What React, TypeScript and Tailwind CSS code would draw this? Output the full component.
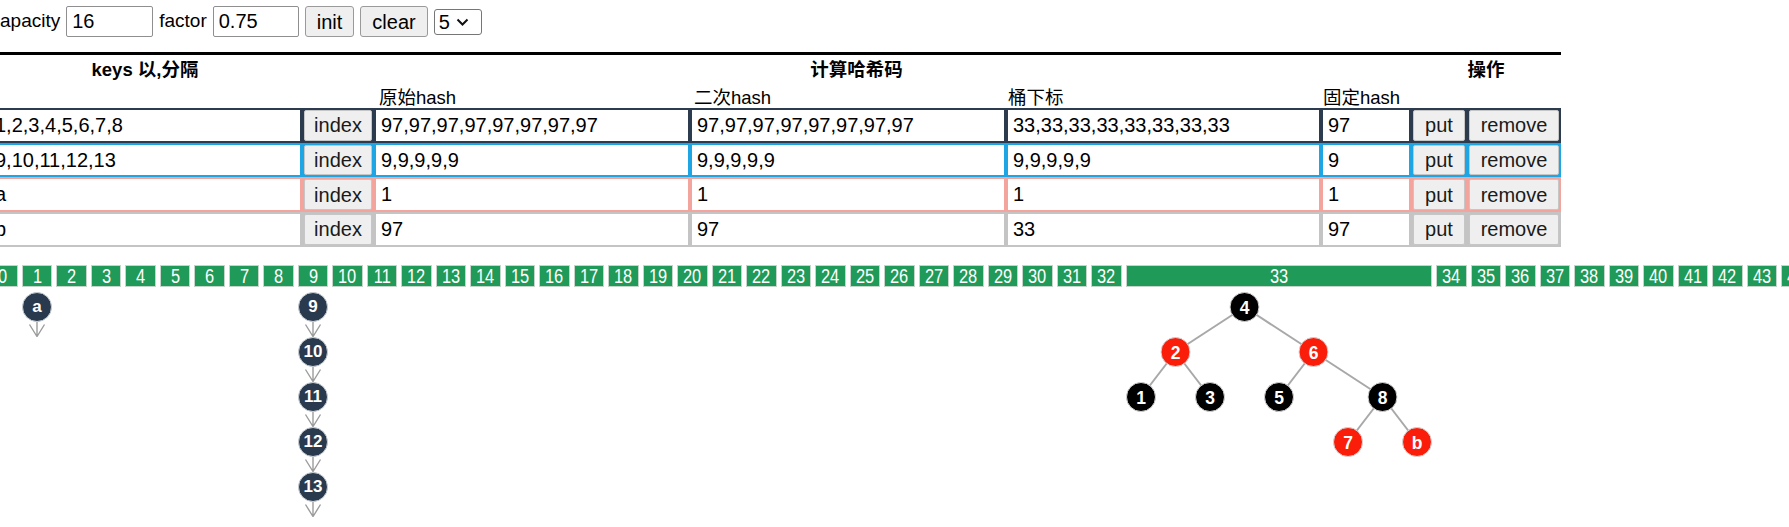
import React from "react";

type Row = {
  color: string;
  keys: string;
  h1: string;
  h2: string;
  idx: string;
  fixed: string;
};

const rows: Row[] = [
  { color: "bg-[#2c3b4d]", keys: "1,2,3,4,5,6,7,8", h1: "97,97,97,97,97,97,97,97", h2: "97,97,97,97,97,97,97,97", idx: "33,33,33,33,33,33,33,33", fixed: "97" },
  { color: "bg-[#1ea5e3]", keys: "9,10,11,12,13", h1: "9,9,9,9,9", h2: "9,9,9,9,9", idx: "9,9,9,9,9", fixed: "9" },
  { color: "bg-[#f3a59d]", keys: "a", h1: "1", h2: "1", idx: "1", fixed: "1" },
  { color: "bg-[#c4c4c4]", keys: "b", h1: "97", h2: "97", idx: "33", fixed: "97" },
];

const GRID = "grid grid-cols-[310px_68px_312px_312px_311px_86px_52px_90px] gap-x-[4px] px-[2px]";

function Cell({ value }: { value: string }) {
  return (
    <input
      readOnly
      defaultValue={value}
      className="h-full w-full min-w-0 bg-white px-[5px] text-[20px] text-black outline-none border-0"
    />
  );
}

function RowBtn({ label }: { label: string }) {
  return (
    <button className="h-full w-full bg-[#efefef] border border-[#c6c6c6] rounded-[2px] text-[20px] text-[#1a1a1a] leading-none">
      {label}
    </button>
  );
}

function Arrow() {
  return (
    <svg width="18" height="15" viewBox="0 0 18 15" className="block">
      <path d="M9 0V14.5M1.5 2.5L9 14.5L16.5 2.5" fill="none" stroke="#9c9c9c" strokeWidth="1.4" />
    </svg>
  );
}

function Chain({ items }: { items: string[] }) {
  return (
    <div className="flex flex-col items-center mt-[4.7px]">
      {items.map((it) => (
        <React.Fragment key={it}>
          <div className="w-[30px] h-[30px] rounded-full bg-[#2a3a4e] border border-[#c9ced4] flex items-center justify-center text-white font-bold text-[17px] leading-none">
            {it}
          </div>
          <Arrow />
        </React.Fragment>
      ))}
    </div>
  );
}

type TNode = { id: string; i: number; d: number; red: boolean };
const tnodes: TNode[] = [
  { id: "1", i: 0, d: 2, red: false },
  { id: "2", i: 1, d: 1, red: true },
  { id: "3", i: 2, d: 2, red: false },
  { id: "4", i: 3, d: 0, red: false },
  { id: "5", i: 4, d: 2, red: false },
  { id: "6", i: 5, d: 1, red: true },
  { id: "7", i: 6, d: 3, red: true },
  { id: "8", i: 7, d: 2, red: false },
  { id: "b", i: 8, d: 3, red: true },
];
const tedges: [string, string][] = [
  ["4", "2"], ["4", "6"], ["2", "1"], ["2", "3"], ["6", "5"], ["6", "8"], ["8", "7"], ["8", "b"],
];
const TW = 9 * 34.5 - 4;
const pos = (id: string) => {
  const n = tnodes.find((t) => t.id === id)!;
  return { x: 15 + n.i * 34.5, y: 15 + n.d * 45 };
};

function Tree() {
  return (
    <svg width={TW} height={166} viewBox={`0 0 ${TW} 166`} className="block mt-[4.7px]">
      {tedges.map(([a, b]) => {
        const p = pos(a);
        const q = pos(b);
        return <line key={a + b} x1={p.x} y1={p.y} x2={q.x} y2={q.y} stroke="#a8a8a8" strokeWidth="2" />;
      })}
      {tnodes.map((n) => {
        const p = pos(n.id);
        return (
          <g key={n.id}>
            <circle cx={p.x} cy={p.y} r={14.5} fill={n.red ? "#fa1d0a" : "#000000"} stroke="#d4d4d4" strokeWidth="1" />
            <text
              x={p.x}
              y={p.y + 1}
              textAnchor="middle"
              dominantBaseline="central"
              fontSize="17.5"
              fontWeight="bold"
              fill="#ffffff"
              fontFamily="'Liberation Sans', Arial, sans-serif"
            >
              {n.id}
            </text>
          </g>
        );
      })}
    </svg>
  );
}

function Bucket({ n }: { n: number }) {
  let content: React.ReactNode = null;
  if (n === 1) content = <Chain items={["a"]} />;
  if (n === 9) content = <Chain items={["9", "10", "11", "12", "13"]} />;
  if (n === 33) content = <Tree />;
  return (
    <div className="flex flex-col items-center shrink-0 min-w-[30.5px]">
      <div className="w-full h-[22px] bg-[#1f9a58] border border-[#c3d6c9] flex items-center justify-center text-white text-[20px] leading-none">
        <span className="inline-block scale-x-[0.82]">{n}</span>
      </div>
      {content}
    </div>
  );
}

export default function App() {
  const buckets = Array.from({ length: 48 }, (_, i) => i);
  return (
    <div className="w-[1789px] h-[527px] overflow-hidden bg-white text-black font-['Liberation_Sans','Noto_Sans_CJK_SC',sans-serif]">
      {/* controls */}
      <div className="flex items-center gap-[6px] ml-[-9.5px] mt-[6px] h-[31px] text-[19px]">
        <span>capacity</span>
        <input
          readOnly
          defaultValue="16"
          className="w-[87px] h-[31px] border border-[#8f8f8f] rounded-[2px] bg-white px-[5px] text-[20px] outline-none"
        />
        <span>factor</span>
        <input
          readOnly
          defaultValue="0.75"
          className="w-[86px] h-[31px] border border-[#8f8f8f] rounded-[2px] bg-white px-[5px] text-[20px] outline-none"
        />
        <button className="h-[31px] px-[11px] bg-[#efefef] border border-[#9a9a9a] rounded-[3px] text-[20px] leading-none">init</button>
        <button className="h-[31px] px-[11px] bg-[#efefef] border border-[#9a9a9a] rounded-[3px] text-[20px] leading-none">clear</button>
        <div className="h-[26px] w-[48px] border border-[#767676] rounded-[3px] bg-white flex items-center pl-[4px] gap-[6px] text-[20px]">
          <span>5</span>
          <svg width="13" height="8" viewBox="0 0 13 8" className="block">
            <path d="M1.5 1.5L6.5 6.5L11.5 1.5" fill="none" stroke="#111" strokeWidth="2" />
          </svg>
        </div>
      </div>

      {/* table */}
      <div className="ml-[-12px] w-[1573px]">
        <div className="mt-[15px] h-[3px] bg-black" />
        <div className={`${GRID} h-[29px] items-center text-[18.5px] font-bold`}>
          <div className="text-center">keys 以,分隔</div>
          <div className="col-span-5 text-center">计算哈希码</div>
          <div className="col-span-2 text-center">操作</div>
        </div>
        <div className={`${GRID} h-[24px] items-center text-[18.5px]`}>
          <div />
          <div />
          <div className="pl-[3px]">原始hash</div>
          <div className="pl-[2px]">二次hash</div>
          <div className="pl-[0px]">桶下标</div>
          <div className="pl-[0px]">固定hash</div>
          <div />
          <div />
        </div>
        {rows.map((r, k) => (
          <div key={k} className={`${GRID} ${r.color} h-[34.7px] py-[2px]`}>
            <Cell value={r.keys} />
            <RowBtn label="index" />
            <Cell value={r.h1} />
            <Cell value={r.h2} />
            <Cell value={r.idx} />
            <Cell value={r.fixed} />
            <RowBtn label="put" />
            <RowBtn label="remove" />
          </div>
        ))}
      </div>

      {/* buckets */}
      <div className="flex items-start gap-[4px] ml-[-12.7px] mt-[18.2px]">
        {buckets.map((n) => (
          <Bucket key={n} n={n} />
        ))}
      </div>
    </div>
  );
}
